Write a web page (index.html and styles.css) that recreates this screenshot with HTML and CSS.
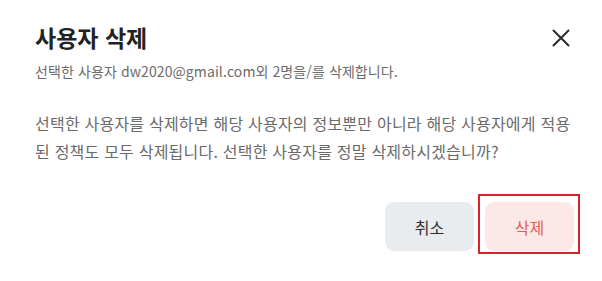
FILE: index.html
```html
<!DOCTYPE html>
<html lang="ko">
<head>
<meta charset="utf-8">
<link rel="stylesheet" href="styles.css">
</head>
<body>
<div class="modal">
  <div class="header">
    <h1 class="title">사용자 삭제</h1>
    <button class="close" aria-label="닫기">
      <svg width="18" height="18" viewBox="0 0 18 18"><path d="M1.5 1.5 L16.5 16.5 M16.5 1.5 L1.5 16.5" stroke="#2b2b2b" stroke-width="2" stroke-linecap="round" fill="none"/></svg>
    </button>
  </div>
  <p class="subtitle">선택한 사용자 dw2020@gmail.com외 2명을/를 삭제합니다.</p>
  <p class="body">선택한 사용자를 삭제하면 해당 사용자의 정보뿐만 아니라 해당 사용자에게 적용된 정책도 모두 삭제됩니다. 선택한 사용자를 정말 삭제하시겠습니까?</p>
  <div class="footer">
    <button class="btn btn-cancel">취소</button>
    <span class="highlight"><button class="btn btn-delete">삭제</button></span>
  </div>
</div>
</body>
</html>
```
FILE: styles.css
```css
html, body {
  margin: 0;
  padding: 0;
  background: #ffffff;
}
body {
  font-family: "Noto Sans CJK KR", "Noto Sans", sans-serif;
  width: 602px;
  height: 281px;
  overflow: hidden;
}
.modal {
  padding: 22px 28px 0 35px;
}
.header {
  display: flex;
  justify-content: space-between;
  align-items: center;
  padding-right: 4px;
}
.title {
  margin: 0;
  font-size: 23px;
  line-height: 31px;
  font-weight: 700;
  color: #222222;
}
.close {
  border: 0;
  background: none;
  padding: 0;
  width: 18px;
  height: 18px;
  display: flex;
  margin-top: 0;
}
.subtitle {
  margin: 8px 0 0;
  font-size: 14px;
  letter-spacing: 0.1px;
  line-height: 20px;
  color: #6b6b6b;
}
.body {
  margin: 28px 0 0;
  font-size: 16px;
  letter-spacing: 0.22px;
  line-height: 28px;
  color: #6a6a6a;
}
.footer {
  display: flex;
  justify-content: flex-end;
  gap: 11px;
  margin-top: 37px;
}
.btn {
  width: 89px;
  height: 49px;
  border: 0;
  border-radius: 9px;
  font-family: "Noto Sans CJK KR", "Noto Sans", sans-serif;
  font-size: 16px;
  padding: 0;
}
.btn-cancel {
  background: #e9ecef;
  color: #2e2e2e;
}
.btn-delete {
  background: #fce9e7;
  color: #e2614f;
}
.highlight {
  position: relative;
  display: flex;
}
.highlight::after {
  content: "";
  position: absolute;
  left: -7px;
  right: -6px;
  top: -8px;
  bottom: -3px;
  border: 2px solid #d8232a;
  pointer-events: none;
}
```
